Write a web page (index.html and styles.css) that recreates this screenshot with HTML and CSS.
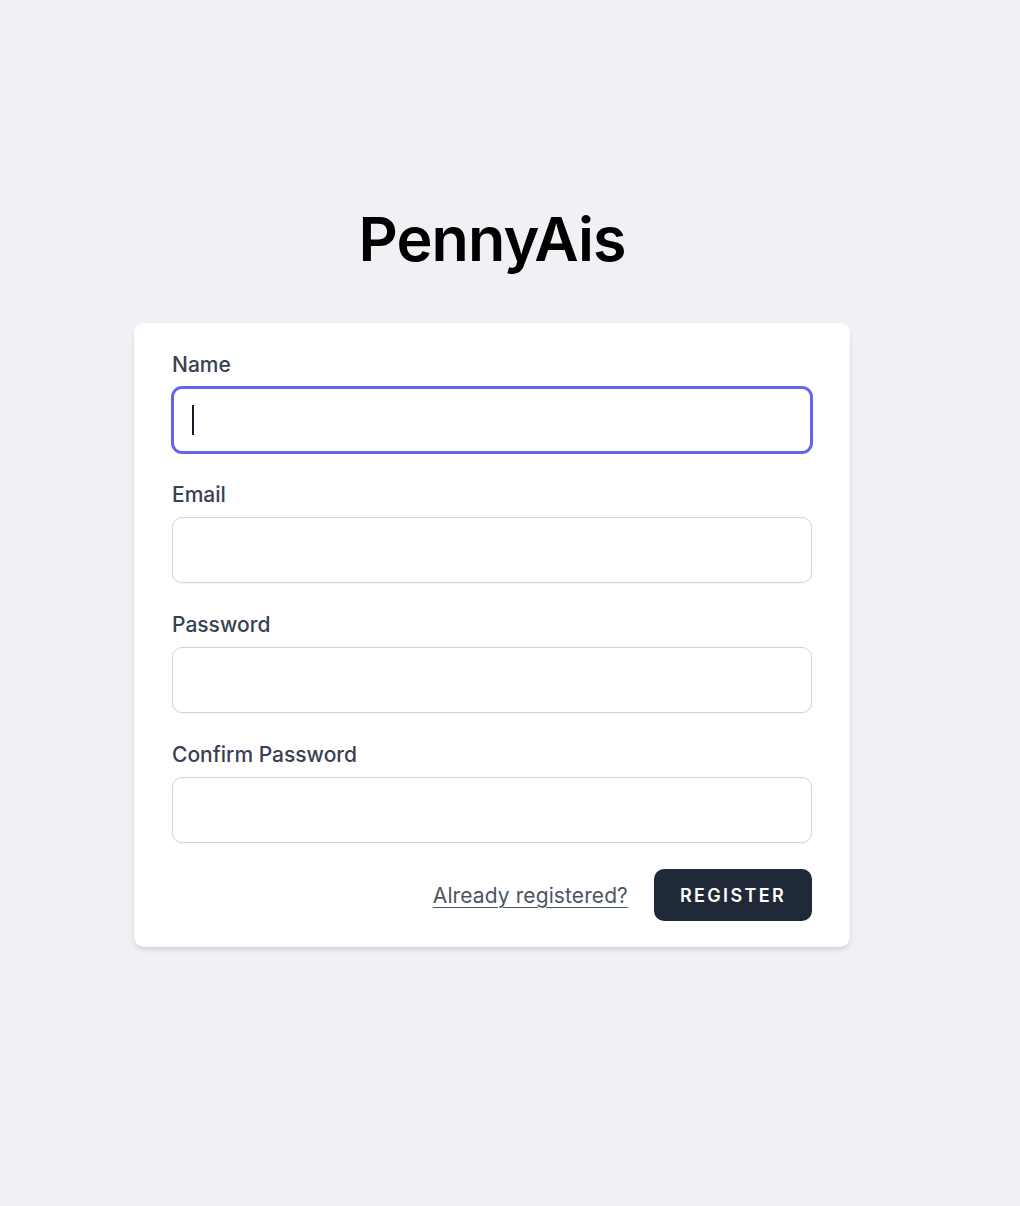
FILE: index.html
```html
<!DOCTYPE html>
<html lang="en">
<head>
<meta charset="utf-8">
<title>PennyAis</title>
<link rel="stylesheet" href="styles.css">
</head>
<body>
<div class="page">
  <h1 class="brand">PennyAis</h1>
  <form class="card">
    <div class="field">
      <label class="label" for="name">Name</label>
      <div class="input-wrap">
        <input class="input input-focus" id="name" type="text">
        <span class="caret"></span>
      </div>
    </div>
    <div class="field">
      <label class="label" for="email">Email</label>
      <input class="input" id="email" type="email">
    </div>
    <div class="field">
      <label class="label" for="password">Password</label>
      <input class="input" id="password" type="password">
    </div>
    <div class="field">
      <label class="label" for="password_confirmation">Confirm Password</label>
      <input class="input" id="password_confirmation" type="password">
    </div>
    <div class="actions">
      <a class="link" href="#">Already registered?</a>
      <button class="btn" type="button">Register</button>
    </div>
  </form>
</div>
</body>
</html>
```
FILE: styles.css
```css
html, body {
  margin: 0;
  padding: 0;
  background: #f0f1f5;
}
body {
  font-family: Inter, "Noto Sans", sans-serif;
  color: #111827;
  min-height: 1206px;
}
.page {
  width: 984px;
  display: flex;
  flex-direction: column;
  align-items: center;
  padding-top: 196px;
}
.brand {
  margin: 0;
  font-size: 61px;
  font-weight: 600;
  line-height: 86px;
  height: 86px;
  color: #000;
  letter-spacing: -0.9px;
}
.card {
  margin-top: 41px;
  width: 716px;
  box-sizing: border-box;
  background: #fff;
  border-radius: 10px;
  box-shadow: 0 4px 6px -1px rgba(0,0,0,0.1), 0 2px 4px -2px rgba(0,0,0,0.1);
  padding: 26px 38px 26px 38px;
}
.field + .field {
  margin-top: 26px;
}
.label {
  display: block;
  font-size: 21px;
  line-height: 32px;
  font-weight: 500;
  color: #374151;
}
.input-wrap {
  position: relative;
}
.input {
  display: block;
  width: 100%;
  box-sizing: border-box;
  margin-top: 6px;
  height: 66px;
  border: 1px solid #d1d5db;
  border-radius: 10px;
  background: #fff;
  box-shadow: 0 1px 2px rgba(0,0,0,0.05);
  font: inherit;
  font-size: 24px;
  padding: 0 19px;
  outline: none;
}
.input-focus {
  border: 2px solid #6366f1;
  box-shadow: 0 0 0 1px #6366f1;
}
.caret {
  position: absolute;
  left: 20px;
  top: 18px;
  width: 2px;
  height: 30px;
  background: #111827;
}
.actions {
  display: flex;
  justify-content: flex-end;
  align-items: center;
  margin-top: 26px;
}
.link {
  font-size: 21px;
  color: #4b5563;
  letter-spacing: 0.1px;
  text-decoration: underline;
  text-underline-offset: 4px;
  text-decoration-thickness: 1px;
}
.btn {
  margin-left: 26px;
  height: 52px;
  padding: 0 26px;
  background: #1f2937;
  color: #fff;
  border: none;
  border-radius: 10px;
  font-family: inherit;
  font-size: 18px;
  font-weight: 600;
  text-transform: uppercase;
  letter-spacing: 0.13em;
}
```
